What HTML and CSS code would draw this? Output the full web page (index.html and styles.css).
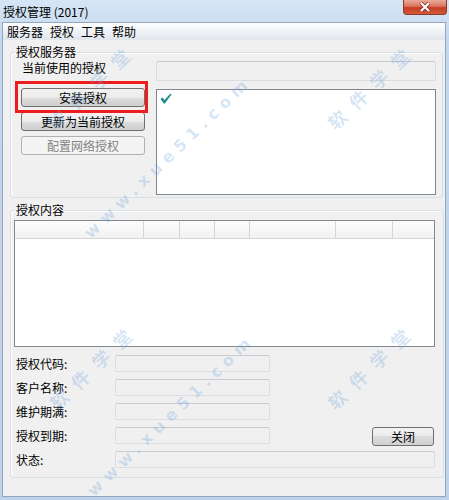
FILE: index.html
```html
<!DOCTYPE html>
<html lang="zh-CN">
<head>
  <meta charset="UTF-8">
  <title>授权管理 (2017)</title>
  <link rel="stylesheet" href="styles.css">
</head>
<body>

  <div class="window">
    <div class="titlebar">
      <span class="title">授权管理 (2017)</span>
      <button class="close" title="关闭">
        <svg width="12" height="10" viewBox="0 0 12 10">
          <path class="x-shadow" d="M2 1 L10 9 M10 1 L2 9" />
          <path class="x-mark" d="M2 1 L10 9 M10 1 L2 9" />
        </svg>
      </button>
    </div>

    <div class="client">
      <div class="menubar">
        <span>服务器</span>
        <span>授权</span>
        <span>工具</span>
        <span>帮助</span>
      </div>

      <div class="content">
        <fieldset class="group group-server">
          <legend>授权服务器</legend>
          <div class="server-grid">
            <div class="label-current">当前使用的授权</div>
            <div class="edit"></div>
            <div class="btn-stack">
              <button class="btn btn-install">安装授权</button>
              <button class="btn">更新为当前授权</button>
              <button class="btn" disabled>配置网络授权</button>
            </div>
            <div class="listbox">
              <svg class="check" width="12" height="11" viewBox="0 0 12 11">
                <path d="M0.5 6 L2.5 4.5 L4.5 7 L10.5 0.5 L11.5 1.5 L4.8 10.5 L3.8 10.5 Z" />
              </svg>
            </div>
          </div>
        </fieldset>

        <fieldset class="group group-content">
          <legend>授权内容</legend>
          <div class="group-body">
            <div class="listview">
              <div class="lv-header">
                <span></span><span></span><span></span><span></span><span></span><span></span><span></span>
              </div>
            </div>

            <div class="form">
              <div class="form-label">授权代码:</div>
              <div class="edit"></div>

              <div class="form-label">客户名称:</div>
              <div class="edit"></div>

              <div class="form-label">维护期满:</div>
              <div class="edit"></div>

              <div class="form-label">授权到期:</div>
              <div class="edit"></div>
              <button class="btn btn-close">关闭</button>

              <div class="form-label">状态:</div>
              <div class="edit edit-wide"></div>
            </div>
          </div>
        </fieldset>
      </div>
    </div>

    <!-- watermark -->
    <span class="wm wm-cn wm-1">软件学堂</span>
    <span class="wm wm-cn wm-2">软件学堂</span>
    <span class="wm wm-cn wm-3">软件学堂</span>
    <span class="wm wm-cn wm-4">软件学堂</span>
    <span class="wm wm-url wm-5">www.xue51.com</span>
    <span class="wm wm-url wm-6">www.xue51.com</span>
  </div>

</body>
</html>
```

FILE: styles.css
```css
* {
  box-sizing: border-box;
}

body {
  margin: 0;
  background: #c0d5eb;
  font-family: "Noto Sans CJK SC", "Noto Sans", sans-serif;
  font-size: 12px;
  color: #000;
}

.window {
  position: relative;
  width: 449px;
  height: 500px;
  overflow: hidden;
  background: linear-gradient(#d6e5f5, #c3d8ee 40px, #bed3ea);
}

/* title bar */
.titlebar {
  height: 22px;
  display: flex;
  justify-content: space-between;
  align-items: flex-start;
}

.title {
  padding: 4px 0 0 3px;
  line-height: 16px;
}

.close {
  width: 44px;
  height: 15px;
  margin-right: 2px;
  padding: 0;
  border: 1px solid #8b3b2d;
  border-top: none;
  border-radius: 0 0 4px 4px;
  background: linear-gradient(#eaaa9a, #d9745d 45%, #c63c22 55%, #d4583a);
  display: flex;
  align-items: center;
  justify-content: center;
}

.close svg {
  display: block;
}

.x-shadow {
  stroke: #7b2a1d;
  stroke-width: 3.6;
  fill: none;
}

.x-mark {
  stroke: #fff;
  stroke-width: 2.2;
  fill: none;
}

/* client area */
.client {
  width: 444px;
  height: 475px;
  margin-left: 2px;
  border: 1px solid #93a6bd;
  background: #f0f0f0;
  display: flex;
  flex-direction: column;
}

.menubar {
  height: 17px;
  display: flex;
  gap: 7px;
  padding-left: 4px;
  line-height: 17px;
  background: linear-gradient(#fcfdfe, #eef1f5 55%, #dfe5ec);
}

.content {
  flex: 1;
  padding: 0 1px 0 7px;
}

/* group boxes */
.group {
  margin: 5px 0 0;
  padding: 0;
  border: 1px solid #d5dfe5;
  border-radius: 3px;
  box-shadow: inset 1px 1px 0 #fff;
}

.group legend {
  margin-left: 4px;
  padding: 0 1px;
  line-height: 14px;
}

.group-server {
  margin-right: 1px;
}

.server-grid {
  display: grid;
  grid-template-columns: 124px 1fr;
  column-gap: 11px;
  row-gap: 7px;
  padding: 2px 6px 2px 10px;
}

.label-current {
  padding-left: 1px;
  line-height: 14px;
}

.server-grid .edit {
  height: 20px;
}

.btn-stack {
  display: flex;
  flex-direction: column;
  gap: 5px;
}

.listbox {
  height: 106px;
  margin-top: 1px;
  border: 1px solid #828790;
  background: #fff;
}

.check {
  display: block;
  margin: 3px 0 0 3px;
  fill: #1d8a8c;
}

/* buttons */
.btn {
  height: 19px;
  padding: 0;
  border: 1px solid #707070;
  border-radius: 3px;
  background: linear-gradient(#f2f2f2, #ebebeb 50%, #dddddd 50%, #cfcfcf);
  font-family: inherit;
  font-size: 12px;
  line-height: 17px;
  color: #000;
}

.btn:disabled {
  border-color: #adb2b5;
  background: #f4f4f4;
  color: #838383;
}

/* red annotation frame around the install button */
.btn-install {
  position: relative;
}

.btn-install::after {
  content: "";
  position: absolute;
  left: -7px;
  right: -4px;
  top: -8px;
  bottom: -7px;
  border: 3px solid #ee1c1c;
}

/* edits */
.edit {
  height: 17px;
  border: 1px solid #d9dce0;
  border-top-color: #c8ccd1;
  border-radius: 2px;
  background: #f0f0f0;
}

/* license content */
.group-body {
  padding: 3px 8px 9px 3px;
}

.listview {
  height: 127px;
  border: 1px solid #828790;
  background: #fff;
}

.lv-header {
  height: 18px;
  display: grid;
  grid-template-columns: 129px 36px 35px 35px 86px 57px 1fr;
  border-bottom: 1px solid #d5d5d5;
  background: linear-gradient(#fdfdfd, #f1f1f1);
}

.lv-header span {
  border-right: 1px solid #d5d5d5;
}

.lv-header span:last-child {
  border-right: none;
}

.form {
  display: grid;
  grid-template-columns: 99px 155px 1fr;
  grid-auto-rows: 17px;
  row-gap: 7px;
  margin: 8px 0 0 2px;
}

.form-label {
  grid-column: 1;
  line-height: 17px;
}

.btn-close {
  width: 62px;
  justify-self: end;
  margin-right: 1px;
}

.edit-wide {
  grid-column: 2 / 4;
}

/* watermark */
.wm {
  position: absolute;
  transform: translate(-50%, -50%) rotate(-44deg);
  color: rgba(110, 165, 220, 0.28);
  font-weight: bold;
  white-space: nowrap;
  pointer-events: none;
}

.wm-cn {
  font-size: 18px;
  letter-spacing: 11px;
}

.wm-url {
  font-family: "DejaVu Sans", sans-serif;
  font-size: 16px;
  letter-spacing: 6px;
}

.wm-1 { left: 92px; top: 85px; }
.wm-2 { left: 372px; top: 85px; }
.wm-3 { left: 94px; top: 365px; }
.wm-4 { left: 372px; top: 365px; }
.wm-5 { left: 168px; top: 157px; }
.wm-6 { left: 171px; top: 415px; }
```
